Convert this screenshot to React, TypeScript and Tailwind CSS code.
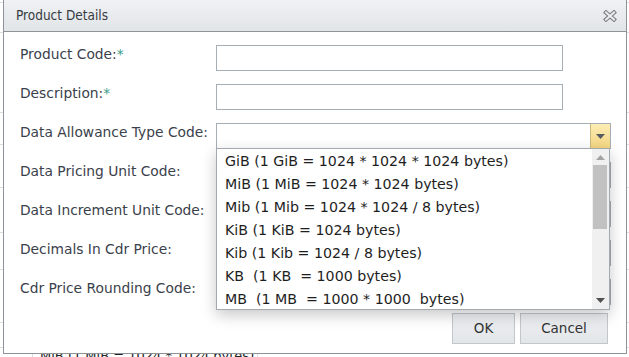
import React from "react";

// data for the open combo list
const UNIT_OPTIONS = [
  "GiB (1 GiB = 1024 * 1024 * 1024 bytes)",
  "MiB (1 MiB = 1024 * 1024 bytes)",
  "Mib (1 Mib = 1024 * 1024 / 8 bytes)",
  "KiB (1 KiB = 1024 bytes)",
  "Kib (1 Kib = 1024 / 8 bytes)",
  "KB  (1 KB  = 1000 bytes)",
  "MB  (1 MB  = 1000 * 1000  bytes)",
];

type FieldKind = "text" | "combo" | "open";

const FIELDS: { label: string; required?: boolean; kind: FieldKind }[] = [
  { label: "Product Code:", required: true, kind: "text" },
  { label: "Description:", required: true, kind: "text" },
  { label: "Data Allowance Type Code:", kind: "open" },
  { label: "Data Pricing Unit Code:", kind: "combo" },
  { label: "Data Increment Unit Code:", kind: "combo" },
  { label: "Decimals In Cdr Price:", kind: "combo" },
  { label: "Cdr Price Rounding Code:", kind: "combo" },
];

export default function App() {
  return (
    <div className="relative h-[357px] w-[629px] overflow-hidden bg-white font-['DejaVu_Sans',sans-serif]">
      <BackgroundGrid />

      {/* Dialog window */}
      <div className="absolute left-[3px] top-[-1px] flex h-[355px] w-[624px] flex-col border border-[#8d9399] bg-white">
        <div className="flex h-[32px] shrink-0 items-center justify-between border-b border-[#8d9399] bg-gradient-to-b from-[#eff1f3] to-[#e2e5e8] pl-[12px] pr-[9px]">
          <span className="font-['DejaVu_Sans_Condensed','DejaVu_Sans',sans-serif] text-[13.5px] text-[#363b41]">
            Product Details
          </span>
          <CloseIcon />
        </div>

        <div className="flex flex-col gap-[13px] pl-[16px] pt-[13px]">
          {FIELDS.map((f) => (
            <div key={f.label} className="flex h-[26px] items-start">
              <div className="w-[196px] shrink-0 text-[13.8px] leading-[19px] text-[#3a414b]">
                {f.label}
                {f.required && <span className="text-[#3a9c88]">*</span>}
              </div>
              {f.kind === "text" ? (
                <div className="h-[26px] w-[347px] border border-[#a5adb5] bg-white" />
              ) : (
                <Combo open={f.kind === "open"} />
              )}
            </div>
          ))}
        </div>

        <div className="mt-[8px] flex justify-end gap-[5px] pr-[18px]">
          <button className="h-[31px] w-[63px] border border-[#c2c7cc] bg-gradient-to-b from-[#eef0f2] to-[#e3e6e9] text-[13.5px] text-[#333]">
            OK
          </button>
          <button className="h-[31px] w-[88px] border border-[#c2c7cc] bg-gradient-to-b from-[#eef0f2] to-[#e3e6e9] text-[13.5px] text-[#333]">
            Cancel
          </button>
        </div>
      </div>
    </div>
  );
}

function Combo({ open }: { open: boolean }) {
  return (
    <div className={`relative flex h-[26px] w-[395px] border border-[#a5adb5] bg-white ${open ? "z-10" : ""}`}>
      <div className="flex-1" />
      <div
        className={`flex w-[20px] items-center justify-center border-l ${
          open
            ? "border-[#c9b77d] bg-gradient-to-b from-[#fcecb4] to-[#f4d680]"
            : "border-[#c5cbd1] bg-gradient-to-b from-[#f3f4f5] to-[#e3e6e9]"
        }`}
      >
        <svg width="9" height="5" viewBox="0 0 9 5">
          <polygon points="0,0 9,0 4.5,5" fill="#555b61" />
        </svg>
      </div>

      {open && (
        <div className="absolute left-[-1px] top-[24px] flex h-[162px] w-[394px] overflow-hidden border border-[#a3a9af] bg-white shadow-[0_5px_14px_rgba(0,0,0,0.22)]">
          <div className="flex-1 pt-[1px]">
            {UNIT_OPTIONS.map((o) => (
              <div key={o} className="h-[23px] whitespace-pre pl-[8px] text-[14.2px] leading-[23px] text-[#1e1e1e]">
                {o}
              </div>
            ))}
          </div>
          {/* scrollbar */}
          <div className="flex w-[17px] flex-col bg-[#f0f0f0]">
            <div className="flex h-[16px] items-center justify-center">
              <svg width="9" height="5" viewBox="0 0 9 5">
                <polygon points="0,5 9,5 4.5,0" fill="#a3a3a3" />
              </svg>
            </div>
            <div className="ml-[1px] h-[64px] w-[14px] bg-[#c1c1c1]" />
            <div className="flex-1" />
            <div className="flex h-[17px] items-center justify-center">
              <svg width="9" height="5" viewBox="0 0 9 5">
                <polygon points="0,0 9,0 4.5,5" fill="#505050" />
              </svg>
            </div>
          </div>
        </div>
      )}
    </div>
  );
}

function CloseIcon() {
  return (
    <svg width="14" height="12" viewBox="0 0 14 12">
      <g strokeLinecap="square">
        <path d="M3 2.5 L11 9.5 M11 2.5 L3 9.5" stroke="#7b7f84" strokeWidth="4.2" />
        <path d="M3 2.5 L11 9.5 M11 2.5 L3 9.5" stroke="#eceef0" strokeWidth="2" />
      </g>
    </svg>
  );
}

// Page content that peeks out behind the dialog
function BackgroundGrid() {
  const rows = [3, 30, 80, 32, 43, 45, 37, 53, 25];
  return (
    <div className="flex h-[357px] flex-col">
      {rows.map((h, i) => (
        <div key={i} className="shrink-0 border-b border-[#dcdfe2]" style={{ height: h }} />
      ))}
      <div className="flex flex-1">
        <div className="w-[33px] border-r border-[#dcdfe2]" />
        <div className="w-[225px] border-r border-[#dcdfe2] pl-[7px] text-[13px] leading-[16px] text-[#222]">
          MiB (1 MiB = 1024 * 1024 bytes)
        </div>
        <div className="flex-1" />
      </div>
    </div>
  );
}
